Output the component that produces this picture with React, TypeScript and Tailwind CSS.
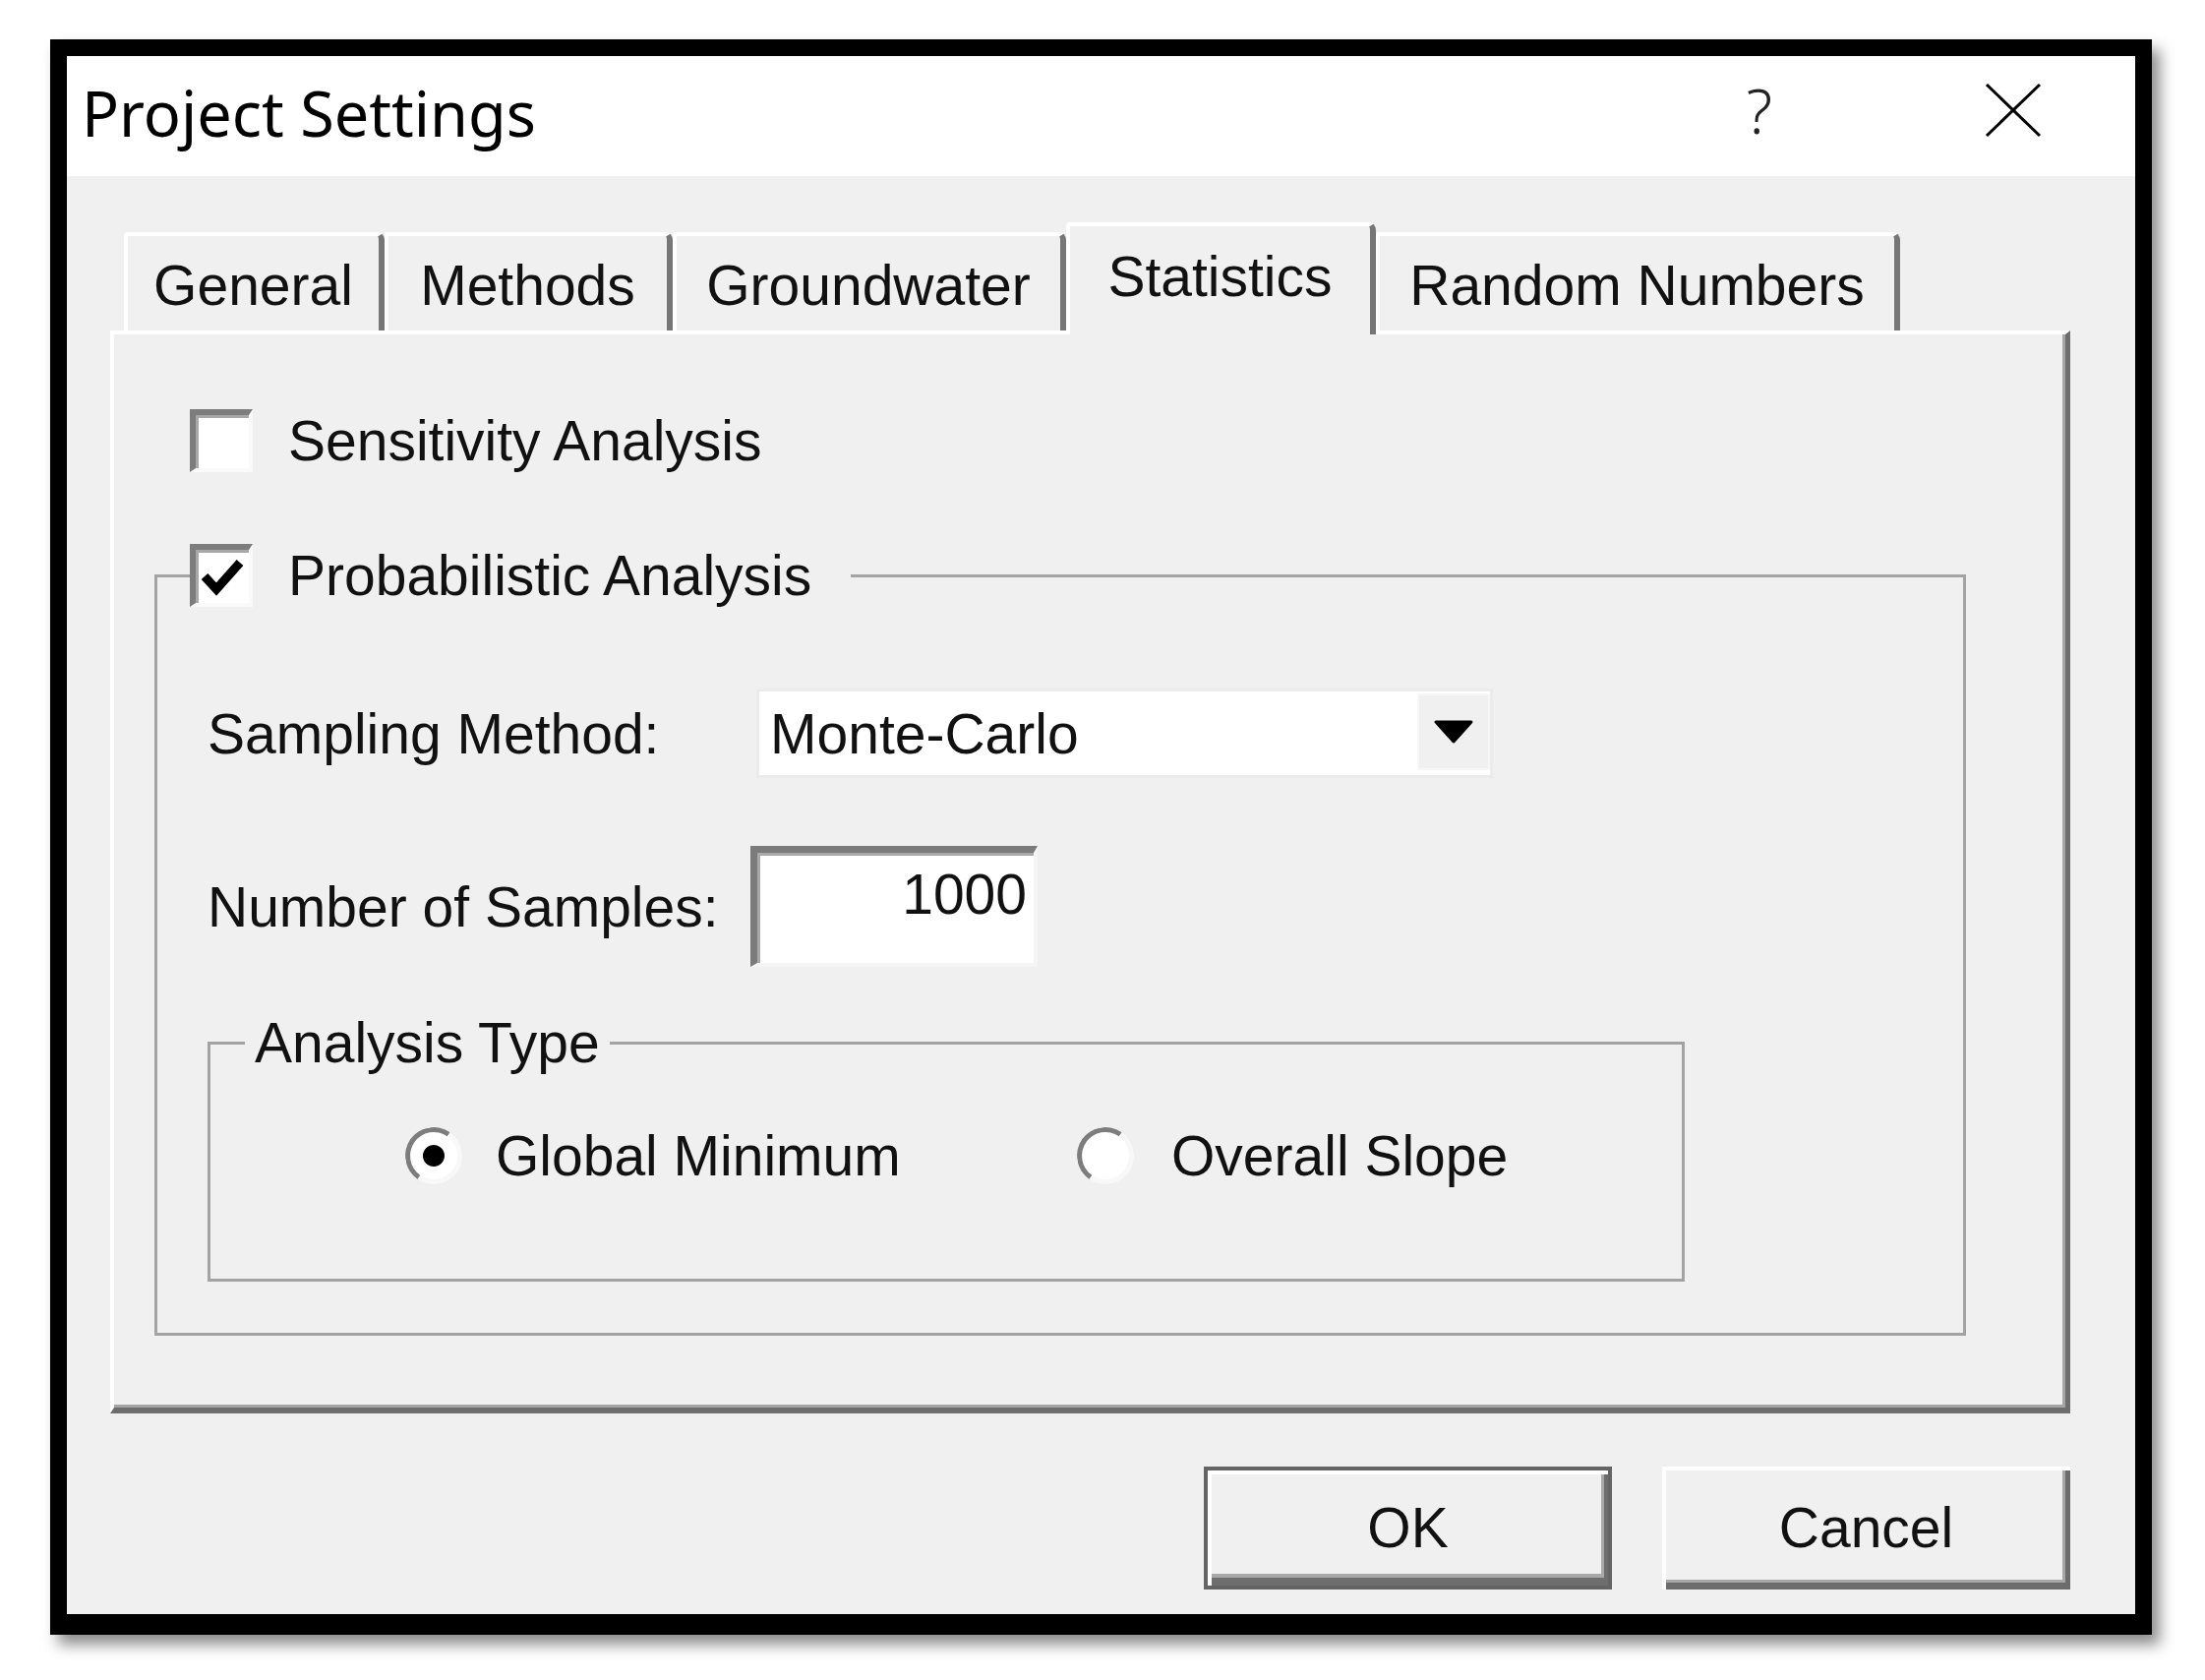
import React from "react";

const dlgFont = { fontFamily: '"Liberation Sans", Arial, sans-serif' };
const titleFont = { fontFamily: '"Noto Sans", "Open Sans", sans-serif' };

const tabs = [
  { label: "General", width: "w-[265px]", active: false },
  { label: "Methods", width: "w-[293px]", active: false },
  { label: "Groundwater", width: "w-[400px]", active: false },
  { label: "Statistics", width: "w-[315px]", active: true },
  { label: "Random Numbers", width: "w-[533px]", active: false },
];

const Checkbox = ({ checked }: { checked?: boolean }) => (
  <div className="w-[64px] h-[64px] shrink-0 flex items-center justify-center bg-white border-t-[6px] border-l-[6px] border-[#7d7d7d] border-r-[4px] border-b-[4px] border-r-[#fafafa] border-b-[#fafafa] shadow-[inset_3px_3px_0_#a8a8a8]">
    {checked && (
      <svg width="46" height="46" viewBox="0 0 46 46" className="mt-[2px]">
        <path d="M5 22 L17 35 L41 8" fill="none" stroke="#000" strokeWidth="9" strokeLinejoin="miter" />
      </svg>
    )}
  </div>
);

const Radio = ({ checked }: { checked?: boolean }) => (
  <div className="w-[58px] h-[58px] shrink-0 rounded-full flex items-center justify-center bg-white border-[5px] border-t-[#7d7d7d] border-l-[#7d7d7d] border-r-[#f8f8f8] border-b-[#f8f8f8] rotate-[-10deg]">
    {checked && <div className="w-[22px] h-[22px] rounded-full bg-black" />}
  </div>
);

const Tab = ({ label, width, active }: { label: string; width: string; active: boolean }) => (
  <div
    className={`${width} ${
      active ? "h-[114px] z-10" : "h-[100px] mb-[4px]"
    } relative flex items-center justify-center bg-[#f0f0f0] border-t-[4px] border-l-[4px] border-white border-r-[6px] border-r-[#767676] rounded-tr-[8px] rounded-tl-[4px] text-[57px] leading-none`}
  >
    <span className={active ? "-mt-[8px]" : "mt-[4px]"}>{label}</span>
  </div>
);

export default function App() {
  return (
    <div className="w-[2242px] h-[1708px] bg-white pl-[51px] pt-[40px] text-[#111]" style={dlgFont}>
      <div className="w-[2137px] h-[1622px] flex flex-col border-black border-t-[17px] border-l-[17px] border-r-[17px] border-b-[21px] shadow-[8px_10px_14px_rgba(0,0,0,0.45)]">
        {/* title bar */}
        <div className="h-[122px] shrink-0 bg-white flex items-center pl-[15px]">
          <span className="text-[63px] leading-none -mt-[8px] text-black" style={titleFont}>
            Project Settings
          </span>
          <div className="ml-auto flex items-center pr-[74px] gap-[158px] -mt-[12px]">
            <span className="w-[100px] text-center text-[62px] font-light leading-none text-[#222]" style={titleFont}>
              ?
            </span>
            <div className="w-[100px] flex justify-center">
              <svg width="58" height="56" viewBox="0 0 58 56">
                <path d="M2 2 L56 54 M56 2 L2 54" stroke="#000" strokeWidth="3" fill="none" />
              </svg>
            </div>
          </div>
        </div>

        {/* body */}
        <div className="flex-1 bg-[#f0f0f0] pl-[44px] pt-[47px]">
          <div className="flex items-end ml-[14px] -mb-[4px] relative z-10">
            {tabs.map((t) => (
              <Tab key={t.label} {...t} />
            ))}
          </div>

          <div className="w-[1993px] h-[1101px] bg-[#f0f0f0] border-l-[4px] border-t-[4px] border-white border-r-[5px] border-b-[6px] border-r-[#6e6e6e] border-b-[#6e6e6e] shadow-[inset_-3px_-3px_0_#a5a5a5] pl-[41px] pt-[75px] text-[57px] leading-[66px]">
            <div className="flex items-center gap-[36px] ml-[36px]">
              <Checkbox />
              <span>Sensitivity Analysis</span>
            </div>

            <fieldset className="mt-[71px] w-[1842px] h-[806px] border-[3px] border-[#a3a3a3]">
              <legend className="ml-[33px] pr-[40px] bg-[#f0f0f0]">
                <div className="flex items-center gap-[36px]">
                  <Checkbox checked />
                  <span>Probabilistic Analysis</span>
                </div>
              </legend>

              <div className="pl-[51px]">
                <div className="flex items-center mt-[82px]">
                  <span className="w-[558px]">Sampling Method:</span>
                  <div className="w-[749px] h-[91px] flex items-stretch bg-white border-[3px] border-[#ebebeb]">
                    <span className="flex-1 pl-[11px] flex items-center">Monte-Carlo</span>
                    <div className="w-[74px] my-[2px] mb-[5px] bg-[#f0f0f0] border-[2px] border-[#f7f7f7] flex items-center justify-center">
                      <svg width="40" height="24" viewBox="0 0 40 24">
                        <path d="M2 2 L38 2 L20 22 Z" fill="#000" stroke="#000" strokeWidth="3" strokeLinejoin="round" />
                      </svg>
                    </div>
                  </div>
                </div>

                <div className="flex items-center mt-[69px]">
                  <span className="w-[552px]">Number of Samples:</span>
                  <div className="w-[292px] h-[123px] bg-white border-t-[7px] border-l-[7px] border-[#7b7b7b] border-r-[4px] border-b-[4px] border-r-[#f5f5f5] border-b-[#f5f5f5] shadow-[inset_3px_3px_0_#a8a8a8] text-right pr-[7px] pt-[9px]">
                    1000
                  </div>
                </div>

                <fieldset className="mt-[44px] w-[1502px] h-[276px] border-[3px] border-[#a3a3a3]">
                  <legend className="ml-[35px] px-[10px]">Analysis Type</legend>
                  <div className="flex items-center pl-[198px] mt-[49px]">
                    <div className="w-[683px] flex items-center gap-[34px]">
                      <Radio checked />
                      <span>Global Minimum</span>
                    </div>
                    <div className="flex items-center gap-[38px]">
                      <Radio />
                      <span>Overall Slope</span>
                    </div>
                  </div>
                </fieldset>
              </div>
            </fieldset>
          </div>

          {/* buttons */}
          <div className="w-[1993px] mt-[54px] flex justify-end gap-[51px] text-[57px] leading-none">
            <button className="w-[415px] h-[125px] flex items-center justify-center bg-[#f0f0f0] border-[4px] border-[#646464] shadow-[inset_4px_4px_0_#ffffff,inset_-4px_-8px_0_#6e6e6e,inset_-7px_-12px_0_#a8a8a8]">
              OK
            </button>
            <button className="w-[415px] h-[125px] flex items-center justify-center bg-[#f0f0f0] shadow-[inset_4px_4px_0_#fdfdfd,inset_-5px_-7px_0_#6c6c6c,inset_-8px_-10px_0_#a6a6a6]">
              Cancel
            </button>
          </div>
        </div>
      </div>
    </div>
  );
}
